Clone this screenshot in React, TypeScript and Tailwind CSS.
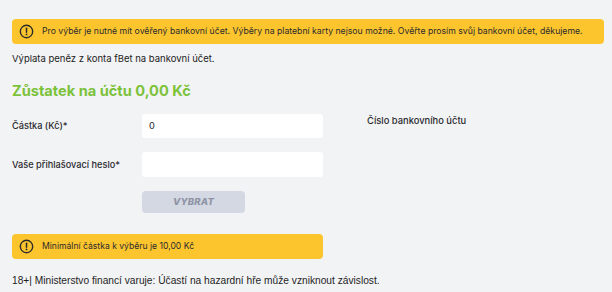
import React from "react";

function AlertIcon() {
  return (
    <svg width="15" height="15" viewBox="0 0 16 16" fill="none" className="shrink-0">
      <circle cx="8" cy="8" r="6.6" stroke="#2b2b2b" strokeWidth="1.5" />
      <path d="M8 4.6v4.2" stroke="#2b2b2b" strokeWidth="1.6" strokeLinecap="round" />
      <circle cx="8" cy="11.1" r="0.95" fill="#2b2b2b" />
    </svg>
  );
}

export default function App() {
  return (
    <div
      className="w-[612px] h-[292px] overflow-hidden bg-[#f2f3f5] text-[#2a2a2e]"
      style={{ fontFamily: "Inter, 'Noto Sans', sans-serif" }}
    >
      <div className="pl-[12px] pr-[8px] pt-[19px]">
        <div className="h-[25px] rounded-[4px] bg-[#fdc52d] flex items-center gap-[8px] pl-[7px] text-[8.7px] text-[#2a2a2e]">
          <AlertIcon />
          <span>
            Pro výběr je nutné mít ověřený bankovní účet. Výběry na platební karty nejsou možné. Ověřte prosím svůj bankovní účet, děkujeme.
          </span>
        </div>
      </div>
      <div className="pl-[12px] mt-[9px] text-[9.5px] leading-[12px] text-[#222]">
        Výplata peněz z konta fBet na bankovní účet.
      </div>
      <div className="pl-[12px] mt-[17px] text-[14.6px] leading-[18px] font-bold text-[#7cc23a]">
        Zůstatek na účtu 0,00 Kč
      </div>
      <div className="flex pl-[12px] mt-[14px]">
        <div className="w-[311px]">
          <div className="flex items-center h-[24px]">
            <div className="w-[130px] text-[9.2px] font-medium">Částka (Kč)*</div>
            <div className="w-[181px] h-[24px] rounded-[3px] bg-white flex items-center pl-[7px] text-[9px] font-medium text-[#444]">
              0
            </div>
          </div>
          <div className="flex items-center h-[25px] mt-[14px]">
            <div className="w-[130px] text-[9.2px] font-medium">Vaše přihlašovací heslo*</div>
            <div className="w-[181px] h-[25px] rounded-[3px] bg-white" />
          </div>
          <div className="pl-[130px] mt-[14px]">
            <div className="w-[103px] h-[22px] rounded-[4px] bg-[#d4d8e2] flex items-center justify-center text-[9.5px] font-extrabold italic text-[#8e94a5] tracking-[0.2px]">
              VYBRAT
            </div>
          </div>
          <div className="mt-[21px] h-[25px] rounded-[4px] bg-[#fdc52d] flex items-center gap-[8px] pl-[7px] text-[8.6px]">
            <AlertIcon />
            <span>Minimální částka k výběru je 10,00 Kč</span>
          </div>
        </div>
        <div className="pl-[44px] pt-[1px] text-[9.4px] font-medium leading-[12px]">Číslo bankovního účtu</div>
      </div>
      <div
        className="pl-[12px] mt-[15px] text-[10.2px] leading-[13px] text-[#1e1e1e]"
        style={{ fontFamily: "'Liberation Sans', Arial, sans-serif" }}
      >
        18+| Ministerstvo financí varuje: Účastí na hazardní hře může vzniknout závislost.
      </div>
    </div>
  );
}
